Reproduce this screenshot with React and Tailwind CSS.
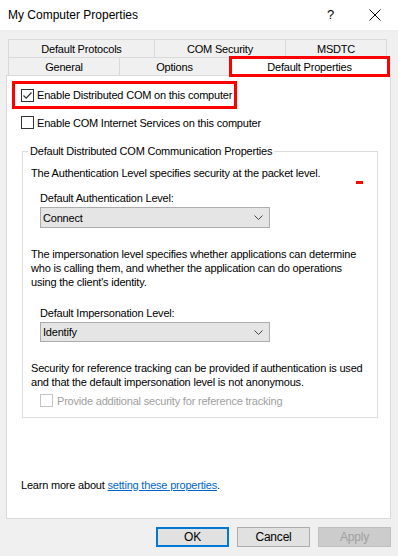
import React from 'react';

const Check = ({ checked, disabled }) => (
  <span
    className={`w-[13px] h-[13px] shrink-0 border flex items-center justify-center ${
      disabled ? 'border-[#c4c4c4] bg-white' : 'border-[#333] bg-white'
    }`}
  >
    {checked && (
      <svg width="11" height="11" viewBox="0 0 11 11">
        <path d="M1.5 5.5 L4.2 8.2 L9.5 2.5" fill="none" stroke="#333" strokeWidth="1.2" />
      </svg>
    )}
  </span>
);

const Select = ({ value, h }) => (
  <div className={`ml-[17px] w-[230px] ${h} bg-[#e5e5e5] border border-[#adadad] flex items-center justify-between pl-[2px] pr-[6px]`}>
    <span>{value}</span>
    <svg width="9" height="5" viewBox="0 0 9 5">
      <path d="M0.5 0.5 L4.5 4.5 L8.5 0.5" fill="none" stroke="#444" strokeWidth="1" />
    </svg>
  </div>
);

const Button = ({ children, primary, disabled }) => (
  <div
    className={`w-[73px] h-[20px] flex items-center justify-center text-[12px] ${
      primary
        ? 'border-2 border-[#0078d7] bg-[#e1e1e1]'
        : disabled
        ? 'border border-[#bfbfbf] bg-[#cccccc] text-[#a0a0a0]'
        : 'border border-[#adadad] bg-[#e1e1e1]'
    }`}
  >
    {children}
  </div>
);

export default function App() {
  return (
    <div className="w-[398px] h-[556px] bg-[#f0f0f0] text-black text-[11px] tracking-[-0.2px] leading-[14px] font-['Segoe_UI','Liberation_Sans',sans-serif] whitespace-nowrap overflow-hidden">
      {/* Title bar */}
      <div className="h-[30px] bg-white flex items-center pl-[8px]">
        <span className="flex-1 text-[12px] tracking-normal">My Computer Properties</span>
        <span className="w-[14px] text-[13px] mr-[28px]">?</span>
        <svg width="12" height="12" viewBox="0 0 12 12" className="mr-[17px]">
          <path d="M0.5 0.5 L11.5 11.5 M11.5 0.5 L0.5 11.5" stroke="#000" strokeWidth="1" />
        </svg>
      </div>

      {/* Tabs */}
      <div className="pt-[9px] pl-[8px]">
        <div className="flex h-[18px]">
          <div className="w-[146px] border-t border-l border-[#d9d9d9] flex items-center justify-center">Default Protocols</div>
          <div className="w-[131px] border-t border-l border-[#d9d9d9] flex items-center justify-center">COM Security</div>
          <div className="w-[102px] border-t border-l border-r border-[#d9d9d9] flex items-center justify-center">MSDTC</div>
        </div>
        <div className="flex h-[18px] items-start">
          <div className="w-[111px] h-[18px] border-t border-l border-[#d9d9d9] flex items-center justify-center">General</div>
          <div className="w-[110px] h-[18px] border-t border-l border-[#d9d9d9] flex items-center justify-center">Options</div>
          <div className="relative z-10 -mt-[1px] w-[161px] h-[21px] bg-white border-[3px] border-[#ff0000] flex items-center justify-center">
            Default Properties
          </div>
        </div>
      </div>

      {/* Panel */}
      <div className="ml-[6px] w-[385px] h-[444px] bg-white border border-[#d9d9d9] flex flex-col">
        <div className="mt-[5px] ml-[5px] w-[225px] h-[28px] border-[3px] border-[#ff0000] flex items-center pl-[6px] gap-[3px]">
          <Check checked />
          <span>Enable Distributed COM on this computer</span>
        </div>
        <div className="mt-[7px] ml-[14px] h-[13px] flex items-center gap-[3px]">
          <Check />
          <span>Enable COM Internet Services on this computer</span>
        </div>

        {/* Group box */}
        <div className="relative mt-[22px] ml-[15px] w-[356px] h-[267px] border border-[#dcdcdc] flex flex-col">
          <span className="absolute -top-[8px] left-[5px] bg-white px-[2px]">
            Default Distributed COM Communication Properties
          </span>
          <span className="absolute left-[333px] top-[29px] w-[7px] h-[3px] bg-[#ff0000]" />
          <p className="mt-[14px] ml-[8px]">The Authentication Level specifies security at the packet level.</p>
          <p className="mt-[11px] ml-[17px]">Default Authentication Level:</p>
          <div className="mt-[2px]">
            <Select value="Connect" h="h-[21px]" />
          </div>
          <p className="mt-[19px] ml-[8px]">
            The impersonation level specifies whether applications can determine
            <br />
            who is calling them, and whether the application can do operations
            <br />
            using the client's identity.
          </p>
          <p className="mt-[17px] ml-[17px]">Default Impersonation Level:</p>
          <div className="mt-[2px]">
            <Select value="Identify" h="h-[20px]" />
          </div>
          <p className="mt-[19px] ml-[8px]">
            Security for reference tracking can be provided if authentication is used
            <br />
            and that the default impersonation level is not anonymous.
          </p>
          <div className="mt-[5px] ml-[17px] h-[13px] flex items-center gap-[4px] text-[#a0a0a0]">
            <Check disabled />
            <span>Provide additional security for reference tracking</span>
          </div>
        </div>

        <p className="mt-[60px] ml-[14px]">
          Learn more about <span className="text-[#0066cc] underline">setting these properties</span>.
        </p>
      </div>

      {/* Buttons */}
      <div className="mt-[8px] ml-[156px] flex gap-[8px]">
        <Button primary>OK</Button>
        <Button>Cancel</Button>
        <Button disabled>Apply</Button>
      </div>
    </div>
  );
}
